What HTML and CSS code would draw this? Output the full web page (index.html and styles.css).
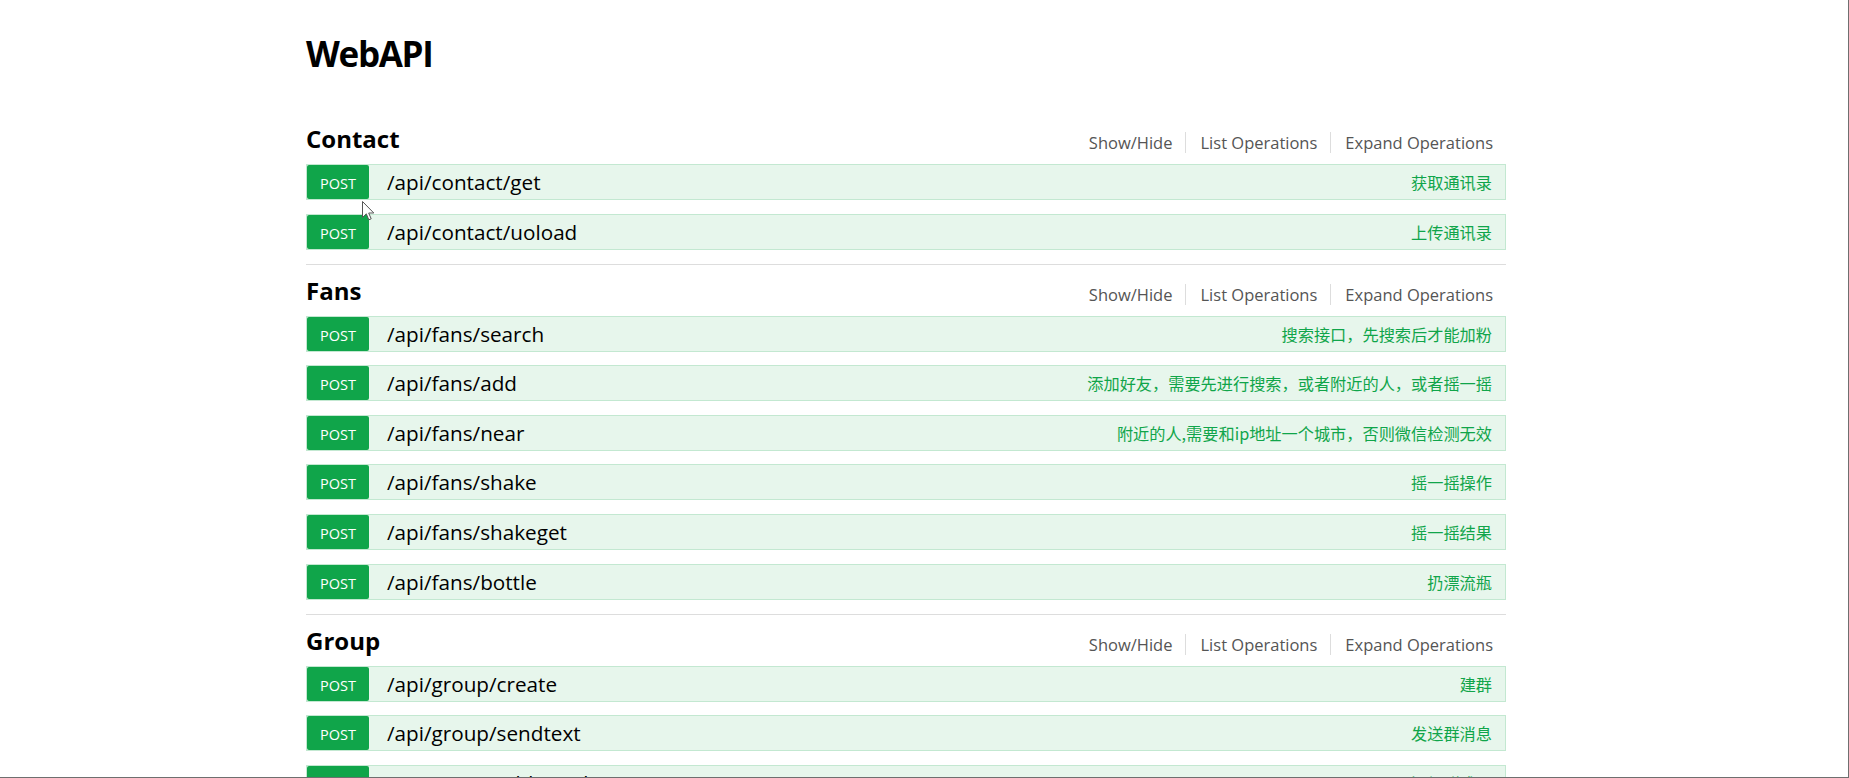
FILE: index.html
```html
<!DOCTYPE html>
<html lang="zh-CN">
<head>
<meta charset="utf-8">
<title>WebAPI</title>
<link rel="stylesheet" href="styles.css">
</head>
<body>
<div class="page">
  <h1 class="title">WebAPI</h1>

  <section class="resource">
    <div class="res-head">
      <h2 class="res-name">Contact</h2>
      <ul class="options">
        <li><a>Show/Hide</a></li>
        <li><a>List Operations</a></li>
        <li><a>Expand Operations</a></li>
      </ul>
    </div>
    <ul class="ops">
      <li class="op"><span class="method">POST</span><span class="path">/api/contact/get</span><span class="desc">获取通讯录</span></li>
      <li class="op"><span class="method">POST</span><span class="path">/api/contact/uoload</span><span class="desc">上传通讯录</span></li>
    </ul>
  </section>

  <section class="resource">
    <div class="res-head">
      <h2 class="res-name">Fans</h2>
      <ul class="options">
        <li><a>Show/Hide</a></li>
        <li><a>List Operations</a></li>
        <li><a>Expand Operations</a></li>
      </ul>
    </div>
    <ul class="ops">
      <li class="op"><span class="method">POST</span><span class="path">/api/fans/search</span><span class="desc">搜索接口，先搜索后才能加粉</span></li>
      <li class="op"><span class="method">POST</span><span class="path">/api/fans/add</span><span class="desc">添加好友，需要先进行搜索，或者附近的人，或者摇一摇</span></li>
      <li class="op"><span class="method">POST</span><span class="path">/api/fans/near</span><span class="desc">附近的人,需要和ip地址一个城市，否则微信检测无效</span></li>
      <li class="op"><span class="method">POST</span><span class="path">/api/fans/shake</span><span class="desc">摇一摇操作</span></li>
      <li class="op"><span class="method">POST</span><span class="path">/api/fans/shakeget</span><span class="desc">摇一摇结果</span></li>
      <li class="op"><span class="method">POST</span><span class="path">/api/fans/bottle</span><span class="desc">扔漂流瓶</span></li>
    </ul>
  </section>

  <section class="resource">
    <div class="res-head">
      <h2 class="res-name">Group</h2>
      <ul class="options">
        <li><a>Show/Hide</a></li>
        <li><a>List Operations</a></li>
        <li><a>Expand Operations</a></li>
      </ul>
    </div>
    <ul class="ops">
      <li class="op"><span class="method">POST</span><span class="path">/api/group/create</span><span class="desc">建群</span></li>
      <li class="op"><span class="method">POST</span><span class="path">/api/group/sendtext</span><span class="desc">发送群消息</span></li>
      <li class="op"><span class="method">POST</span><span class="path">/api/group/addmember</span><span class="desc">添加群成员</span></li>
    </ul>
  </section>
</div>
<svg class="cursor" width="14" height="22" viewBox="0 0 14 22" aria-hidden="true">
  <path d="M0.5 0.5 L0.5 16.5 L4.3 12.8 L6.8 18.8 L9.2 17.8 L6.7 12 L11.8 12 Z" fill="#fff" stroke="#555" stroke-width="1" stroke-linejoin="round"/>
</svg>
</body>
</html>
```

FILE: styles.css
```css
* {
  box-sizing: border-box;
}

html, body {
  margin: 0;
  padding: 0;
}

body {
  height: 778px;
  overflow: hidden;
  background: #fff;
  border-right: 1px solid #6f6f6f;
  border-bottom: 1px solid #6f6f6f;
  font-family: "Open Sans", "Noto Sans CJK SC", sans-serif;
  color: #000;
  position: relative;
}

.page {
  width: 1200px;
  margin-left: 306px;
}

.title {
  margin: 0;
  padding-top: 34px;
  margin-bottom: 39px;
  font-size: 35px;
  line-height: 40px;
  font-weight: 700;
  letter-spacing: -1.3px;
}

.resource {
  border-bottom: 1px solid #ddd;
  padding-bottom: 14px;
}

.res-head {
  height: 51px;
  display: flex;
  justify-content: space-between;
  align-items: flex-start;
}

.res-name {
  margin: 0;
  padding-top: 11px;
  font-size: 24px;
  line-height: 30px;
  font-weight: 700;
}

.options {
  list-style: none;
  margin: 0;
  padding: 19px 0 0;
  display: flex;
}

.options li {
  border-right: 1px solid #ddd;
  height: 21px;
}

.options li:last-child {
  border-right: none;
}

.options a {
  display: block;
  padding: 1px 13px 0 14px;
  font-size: 16.5px;
  line-height: 20px;
  color: #555;
}

.ops {
  list-style: none;
  margin: 0;
  padding: 0;
  display: flex;
  flex-direction: column;
  gap: 13.6px;
}

.op {
  height: 36px;
  display: flex;
  align-items: stretch;
  background: #e7f6ec;
  border: 1px solid #c3e8d1;
}

.method {
  width: 62px;
  flex: none;
  background: #10a54a;
  color: #fff;
  border-radius: 2px;
  text-align: center;
  font-size: 14.5px;
  line-height: 30px;
  padding-top: 4px;
}

.path {
  margin-left: 18px;
  padding-top: 1px;
  font-size: 20.7px;
  line-height: 33px;
  color: #000;
}

.desc {
  margin-left: auto;
  padding-right: 13px;
  padding-top: 1px;
  font-family: "Noto Sans CJK SC", "Open Sans", sans-serif;
  font-size: 16.2px;
  line-height: 33px;
  color: #10a54a;
}

.cursor {
  position: absolute;
  left: 362px;
  top: 201px;
}
```
